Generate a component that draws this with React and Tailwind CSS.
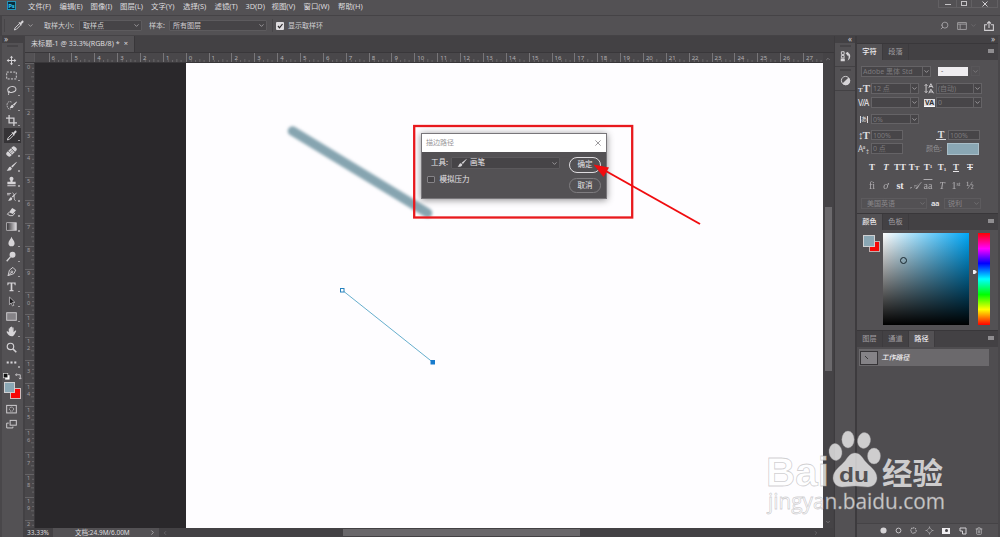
import React from "react";
import { ChevronDown, Search, Trash2 } from "lucide-react";

const MENUS = [
  ["文件(F)", "w-[31.5px]"], ["编辑(E)", "w-[31px]"], ["图像(I)", "w-[29.5px]"], ["图层(L)", "w-[31px]"],
  ["文字(Y)", "w-[32px]"], ["选择(S)", "w-[31.5px]"], ["滤镜(T)", "w-[31px]"], ["3D(D)", "w-[26px]"],
  ["视图(V)", "w-[32px]"], ["窗口(W)", "w-[34.5px]"], ["帮助(H)", "w-[31px]"],
];

const H_LABELS = [6, 5, 4, 3, 2, 1, ...Array.from({ length: 28 }, (_, i) => i)];
const V_LABELS = Array.from({ length: 20 }, (_, i) => String(i)).concat("2");

const s = { fill: "none", stroke: "#d2d0d3", strokeWidth: 1.4 };
const f = { fill: "#d6d4d7" };

const TOOLS = [
  ["move", <path {...f} d="M8 1l2.4 3H8.7v3.3H12V5.6L15 8l-3 2.4V8.7H8.7V12h1.7L8 15l-2.4-3h1.7V8.7H4v1.7L1 8l3-2.4v1.7h3.300V4H5.600z" />],
  ["marquee", <rect {...s} x="1" y="3" width="14" height="10" strokeDasharray="3 1.800" />],
  ["lasso", <g {...s}><ellipse cx="8.500" cy="6.500" rx="6" ry="4.200" transform="rotate(-12 8.500 6.500)" /><path d="M3.500 9c-1.500 1 .5 2.500 1.500 1.200S3.500 9 3.500 10.500c0 1.500 1 2 0 4" /></g>],
  ["quick", <g><path {...s} d="M8 3C4 1 1 4 1.500 8s3 6 5.500 5" strokeWidth="1.100" strokeDasharray="2.500 1" /><path {...f} d="M15.500 2L10 6.500l2 2L16 3zM9.500 7c-2 0-2.500 2-4 4.500 3 .5 5.500 0 5.800-2.500z" /></g>],
  ["crop", <path {...s} strokeWidth="1.900" d="M4.500 0v11.500H16M0 4.500h11.500V16" />],
  ["eyedrop", <g><path {...s} d="M9 5.500L3 11.500 2 14.500l3-1 6-6" /><path {...f} d="M8 4l1-1 1.500 1L13 1c2-1 3 1 2 2.500L12 6l1 1-1.500 1.500z" /></g>],
  ["heal", <g transform="rotate(-45 8 8)"><rect {...f} x="-.5" y="4" width="17" height="8" rx="3" /><path stroke="#535154" d="M5 4v8M11 4v8" /><path stroke="#535154" strokeWidth="1.400" strokeDasharray="1 1" d="M6 7h5M6 9.500h5" /></g>],
  ["brush", <path {...f} d="M15.500 1L7.500 7.500l2 2L15.500 2zM6.500 8.500C4 8 4 11 1 14c4 .5 7.500-.5 7.500-3.500z" />],
  ["stamp", <path {...f} d="M8 1a3 3 0 0 1 2.500 4.500C9.500 7 9.500 7 9.500 8.500H14V12H2V8.500h4.500C6.500 7 6.500 7 5.500 5.500A3 3 0 0 1 8 1zM2 13.300h12v1.500H2z" />],
  ["history", <g><path {...f} d="M15.500 2L8.500 8l1.500 1.500L15.500 3zM7.500 9C5 9 5.500 12 3 14c3 .5 6.500-.5 6-3.500z" /><path {...s} d="M1.500 3.500h6M1.500 5.500h4M9.500 2.500C14 5 10 13 14 14" strokeWidth="1.200" /></g>],
  ["eraser", <g><path {...f} d="M9 3l5.500 3L10 11.500 4.500 9z" /><path {...s} d="M4.500 9L2 12l4 2h4l3-4" /></g>],
  ["gradient", <rect x="1" y="2.500" width="14" height="11" fill="url(#tool-grad)" stroke="#d2d0d3" />],
  ["blur", <path {...f} d="M8 1c1 3.500 4.500 6 4.500 9.500a4.500 4.500 0 0 1-9 0C3.500 7 7 4.500 8 1z" />],
  ["dodge", <g><circle {...f} cx="9.500" cy="5.500" r="4.300" /><path {...s} strokeWidth="2" d="M6.500 8.500L1 15" /></g>],
  ["pen", <g {...s}><path d="M10 2l4 4-2.500 5L3 14l2-8z" /><path d="M3 14l5-5" /><circle cx="8.500" cy="8.500" r="1.300" /></g>],
  ["type", <path {...f} d="M2 2h12v4h-1.200l-.8-2.200H9.200v9.200l1.800.6V15H5v-1.400l1.800-.6V3.800H4L3.200 6H2z" />],
  ["select", <path d="M5 1.500v11l2.500-2.500 2 4.500 2-1-2-4.200H13z" fill="#1c1b1d" stroke="#d2d0d3" />],
  ["rect", <rect x="1" y="2.500" width="14" height="11" fill="#858387" stroke="#d2d0d3" strokeWidth="1.300" />],
  ["hand", <path {...f} d="M4 9V4c0-1 1.600-1 1.600 0v3V2.200c0-1.200 1.700-1.200 1.700 0V7 1.500c0-1.200 1.700-1.200 1.700 0V7l.3-4.500c0-1.100 1.700-1.100 1.700.1V9l2-2c1-1 2.500-.2 1.600 1C13 10.500 12 15 8.500 15 5 15 3 13 1 9c-.5-1.200 1-1.700 1.600-1z" />],
  ["zoom", <g {...s} strokeWidth="1.700"><circle cx="6.500" cy="6.500" r="4.700" /><path d="M10 10l5 5" strokeWidth="2.200" /></g>],
  ["more", <g {...f}><rect x="1" y="6.500" width="3" height="3" /><rect x="6.500" y="6.500" width="3" height="3" /><rect x="12" y="6.500" width="3" height="3" /></g>],
];

function Svg({ className, children }) {
  return <svg viewBox="0 0 16 16" className={className}>{children}</svg>;
}

function Chev() {
  return <ChevronDown className="size-[7px] shrink-0 text-[#b4b2b5]" strokeWidth={2.500} />;
}

function Field({ className, text, arrow = true }) {
  return (
    <div className={`flex h-[10.500px] shrink-0 items-center border border-[#656366] bg-[#474548] ${className}`}>
      <span className="min-w-0 flex-1 overflow-hidden whitespace-nowrap pl-px text-[7px] leading-[9px] text-[#7c7a7d]">{text}</span>
      {arrow && <span className="flex h-full w-[8px] items-center justify-center border-l border-[#656366]"><Chev /></span>}
    </div>
  );
}

function Toolbar() {
  return (
    <aside className="flex w-[25px] shrink-0 flex-col border-r-2 border-l-2 border-r-[#434144] border-l-[#49474a] bg-[#535154]">
      <div className="h-[7px] bg-[#434144] pl-[2px] text-[8px] leading-[6px] text-[#d0ced1]">»</div>
      <div className="mx-auto mt-[2px] h-[2px] w-[11px] bg-[#464447]" />
      <div className="mt-[6px] flex flex-col">
        {TOOLS.map(([name, icon]) => (
          <div key={name} className={`relative flex h-[15.080px] items-center ${name === "eyedrop" ? "mx-[2px] bg-[#353336] pl-[2px]" : "pl-[4px]"}`}>
            <Svg className="size-[11px]">{icon}</Svg>
            {name !== "zoom" && <span className={`absolute bottom-[2px] size-[1.500px] bg-[#a19fa2] ${name === "eyedrop" ? "left-[14px]" : "left-[16px]"}`} />}
          </div>
        ))}
      </div>
      <div className="mt-[2px] flex h-[9px] items-center gap-[5px] pl-[1px]">
        <Svg className="size-[7px]"><rect x="5" y="5" width="10" height="10" fill="#fff" /><rect x="1" y="1" width="10" height="10" fill="#111" stroke="#ddd" strokeWidth="1.500" /></Svg>
        <Svg className="size-[7px]"><path {...s} strokeWidth="2" d="M4 1L1 4l3 3M2 4h10v9M9 11l3 3 3-3" /></Svg>
      </div>
      <div className="relative ml-[1.500px] mt-px h-[18px]">
        <div className="absolute left-[6px] top-[6px] h-[11.500px] w-[11px] border border-[#d1bdbd] bg-[#f60707]" />
        <div className="absolute left-0 top-0 h-[11.500px] w-[11px] border border-[#cfcfd1] bg-[#8aa7b4]" />
      </div>
      <div className="mt-[4px] flex flex-col gap-[4px] pl-[4px]">
        <Svg className="size-[11px]"><rect {...s} x="1" y="2" width="14" height="11" /><circle {...s} cx="8" cy="7.500" r="3" strokeDasharray="1.500 1" /></Svg>
        <Svg className="size-[11px]"><rect {...s} x="6" y="2" width="9" height="7" /><path {...s} d="M4 6H1v7h9v-2" /></Svg>
      </div>
    </aside>
  );
}

function HorizontalRuler() {
  return (
    <div className="flex h-[10px] w-[798px] shrink-0 overflow-hidden border-b border-[#39373a] bg-[#49474a]">
      <div className="w-[10px] shrink-0 border-r border-[#5b595c] bg-[#535154]" />
      <div className="w-[13.600px] shrink-0" />
      {H_LABELS.map((n, i) => (
        <div key={i} className="relative h-full w-[22.860px] shrink-0 border-l border-[#777578] pl-[2px] text-[6px] leading-[11px] text-[#b4b2b5]">
          {n}
          <svg className="absolute bottom-0 left-0 h-[3px] w-full" viewBox="0 0 23 3" preserveAspectRatio="none"><path stroke="#777578" strokeWidth=".7" d="M4.500 1v2M9 1v2M13.500 0v3M18 1v2" /></svg>
        </div>
      ))}
    </div>
  );
}

function VerticalRuler() {
  return (
    <div className="h-full w-[10px] shrink-0 overflow-hidden border-r border-[#39373a] bg-[#49474a]">
      {V_LABELS.map((n, k) => (
        <div key={k} className="relative h-[22.860px] border-t border-[#656366] pl-[2px] text-[5.500px] leading-[7px] text-[#a19fa2]">
          {n.split("").map((c, i) => <div key={i}>{c}</div>)}
          <svg className="absolute right-0 top-0 h-full w-[3px]" viewBox="0 0 3 23" preserveAspectRatio="none"><path stroke="#777578" strokeWidth=".7" d="M1 4.500h2M1 9h2M0 13.500h3M1 18h2" /></svg>
        </div>
      ))}
    </div>
  );
}

function StrokePathDialog() {
  return (
    <div className="absolute left-[386px] top-[70px] h-[66px] w-[186px] border border-[#78767a] bg-[#535154] text-[8px] shadow-[0_1px_7px_rgba(0,0,0,0.45)]">
      <div className="flex h-[17.500px] items-center justify-between bg-white pl-[4px] pr-[5px] text-[#99979a]">
        <span className="text-[7px]">描边路径</span>
        <svg viewBox="0 0 8 8" className="size-[6px]"><path d="M.5.5l7 7M7.500.5l-7 7" stroke="#7c7a7d" strokeWidth="1" /></svg>
      </div>
      <div className="flex justify-between pl-[5px] pr-[5px] pt-[4px] text-[#e6e4e7]">
        <div className="flex flex-col">
          <div className="flex h-[15px] items-center pl-[4px]">
            <span className="w-[20px] whitespace-nowrap text-[7.500px]">工具:</span>
            <div className="flex h-[12px] w-[109px] items-center rounded-[1px] border border-[#5b595c] bg-[#464447] pl-[5px] pr-[1px]">
              <Svg className="size-[10px]">{TOOLS[7][1]}</Svg>
              <span className="ml-[3px] flex-1 text-[7.500px]">画笔</span>
              <Chev />
            </div>
          </div>
          <div className="mt-[2px] flex h-[14px] items-center">
            <span className="size-[7.500px] rounded-[1px] border border-[#858387] bg-[#464447]" />
            <span className="ml-[5px] text-[7.500px]">模拟压力</span>
          </div>
        </div>
        <div className="flex flex-col gap-[5px] pt-[1px]">
          <div className="flex h-[16px] w-[32px] items-center justify-center rounded-full border border-[#dedcdf] text-[7.500px]">确定</div>
          <div className="flex h-[15.500px] w-[32px] items-center justify-center rounded-full border border-[#7f7d80] text-[7.500px]">取消</div>
        </div>
      </div>
    </div>
  );
}

function Canvas() {
  return (
    <div className="relative flex h-[465px] w-[788px] shrink-0 overflow-hidden bg-[#2a282b] pl-[151px]">
      <div className="flex-1 bg-[#fefdff]" />
      <svg className="absolute inset-0 h-full w-full" viewBox="35 63 788 465">
        <defs><filter id="soft" x="-20%" y="-20%" width="140%" height="140%"><feGaussianBlur stdDeviation="1.500" /></filter></defs>
        <path d="M292.500 131L427.500 213" stroke="#86a4b0" strokeWidth="9.500" strokeLinecap="round" filter="url(#soft)" />
        <path d="M342 290l90.500 72" stroke="#55a5c6" strokeWidth=".9" />
        <rect x="340.500" y="288.500" width="3.500" height="3.500" fill="#fff" stroke="#2681bd" />
        <rect x="430.500" y="360" width="4.500" height="4.500" fill="#187bcd" />
      </svg>
      <StrokePathDialog />
      <svg className="absolute inset-0 h-full w-full" viewBox="35 63 788 465">
        <rect x="414.200" y="126" width="218" height="91.500" fill="none" stroke="#e8191d" strokeWidth="2.300" />
        <path d="M700 224L604 170" stroke="#f00c0f" strokeWidth="2" />
        <path d="M593.500 164.500l15.500 3-5.500 9.500z" fill="#f00c0f" />
      </svg>
    </div>
  );
}

function Document() {
  return (
    <main className="flex w-[809px] shrink-0 flex-col bg-[#434144]">
      <div className="flex h-[17px] shrink-0 items-stretch border-b border-[#39373a]">
        <div className="flex w-[110px] items-center justify-between border-r border-[#39373a] bg-[#535154] pl-[6px] pr-[6px] text-[7.100px] text-[#dedcdf]">
          <span className="whitespace-nowrap">未标题-1 @ 33.3%(RGB/8) *</span><span className="text-[7.500px]">×</span>
        </div>
      </div>
      <div className="flex h-[475px] shrink-0">
        <div className="flex w-[798px] flex-col">
          <HorizontalRuler />
          <div className="flex h-[465px]"><VerticalRuler /><Canvas /></div>
        </div>
        <div className="flex w-[10px] flex-col items-center justify-between bg-[#454346] py-[3px]">
          <ChevronDown className="size-[6px] rotate-180 text-[#a19fa2]" />
          <div className="-mt-[3px] h-[164px] w-[7px] bg-[#6b696c]" />
          <ChevronDown className="size-[6px] text-[#a19fa2]" />
        </div>
      </div>
      <div className="flex h-[9px] shrink-0 items-center bg-[#434144] text-[6.500px] leading-[9px] text-[#dedcdf]">
        <span className="w-[28px] pl-[2px]">33.33%</span>
        <div className="flex h-full w-[106px] items-center justify-between bg-[#535154] pl-[22px] pr-[3px]"><span>文档:24.9M/6.00M</span><ChevronDown className="size-[7px] -rotate-90" /></div>
        <ChevronDown className="ml-[3px] size-[6px] rotate-90 text-[#858387]" />
        <div className="ml-[175px] h-[7px] w-[237px] bg-[#69676a]" />
        <ChevronDown className="ml-[233px] size-[6px] -rotate-90 text-[#858387]" />
      </div>
    </main>
  );
}

function TabRow({ tabs, active }) {
  return (
    <div className="flex h-[17px] shrink-0 items-stretch border-t border-[#39373a] bg-[#434144] text-[7.200px] text-[#a19fa2]">
      {tabs.map((t) => <div key={t} className={`flex w-[26px] items-center justify-center border-r border-[#3d3b3e] ${t === active ? "bg-[#535154] font-medium text-[#efedf0]" : ""}`}>{t}</div>)}
      <div className="ml-auto mr-[4px] mt-[5px] h-[4px] w-[6px] bg-[#8f8d90]" />
    </div>
  );
}

const G = "flex w-[14px] shrink-0 items-baseline justify-center whitespace-nowrap font-['Liberation_Serif'] leading-none text-[#e9e7ea]";

function CharacterPanel() {
  return (
    <section className="h-[153px] shrink-0 text-[7px] text-[#dedcdf]">
      <div className="flex h-[22.500px] items-center pl-[4px]">
        <Field className="w-[70px]" text="Adobe 黑体 Std" />
        <div className="ml-[7px] h-[9.500px] w-[30px] bg-[#efedf0] pl-[3px] text-[7px] leading-[8px] text-[#656366]">-</div>
        <span className="ml-[3px] flex h-[10px] w-[9px] items-center justify-center border border-[#5e5c5f] opacity-50"><Chev /></span>
      </div>
      <div className="flex h-[12px] items-center pl-[1px]">
        <span className="flex w-[12px] items-baseline font-['Liberation_Serif'] font-bold leading-none"><i className="text-[7px] not-italic">T</i><i className="text-[11px] not-italic">T</i></span>
        <Field className="ml-px w-[48px]" text="12 点" />
        <Svg className="ml-[5px] size-[11px]"><path {...s} d="M3 2v12M1 4l2-2 2 2M1 12l2 2 2-2M7 7l3-6 3 6M8 5h4M7 15l3-6 4 6M8 13h5" /></Svg>
        <Field className="ml-[1px] w-[46px]" text="(自动)" />
      </div>
      <div className="mt-[2px] flex h-[12px] items-center pl-[1px]">
        <span className="w-[12px] text-[8px] font-medium leading-none tracking-[-1px]">V/A</span>
        <Field className="ml-px w-[48px]" text="" />
        <span className="ml-[5px] flex h-[8px] w-[11px] items-center justify-center border-b border-white bg-[#dedcdf] text-[7px] font-bold leading-none text-[#333134]">VA</span>
        <Field className="ml-[1px] w-[46px]" text="0" />
      </div>
      <div className="mt-[4.500px] flex h-[12px] items-center pl-[3px]">
        <span className="w-[8px] border-x border-[#dedcdf] text-center text-[6px] leading-[7px]">あ</span>
        <Field className="ml-[3px] w-[48px]" text="0%" />
      </div>
      <div className="mt-[4px] flex h-[12px] items-center pl-[1px]">
        <span className="w-[12px] whitespace-nowrap font-['Liberation_Serif'] text-[11px] font-bold leading-none tracking-[-1px]">↕T</span>
        <Field className="ml-px w-[32px]" arrow={false} text="100%" />
        <span className="ml-[33px] w-[10px] border-b border-[#dedcdf] text-center font-['Liberation_Serif'] text-[10px] font-bold leading-[9px]">T</span>
        <Field className="ml-[2px] w-[32px]" arrow={false} text="100%" />
      </div>
      <div className="mt-px flex h-[13px] items-center pl-[1px]">
        <span className="w-[12px] whitespace-nowrap text-[8px] leading-none tracking-[-0.500px]">Aª<sub className="text-[5px]">↕</sub></span>
        <Field className="ml-px w-[32px]" arrow={false} text="0 点" />
        <span className="ml-[23px] w-[21px] text-[7px] text-[#918f92]">颜色:</span>
        <div className="h-[12px] w-[32px] border border-[#a9bec8] bg-[#8aa7b4]" />
      </div>
      <div className="mt-[5.500px] flex h-[14px] items-center pl-[8px] text-[9px] font-bold">
        <span className={G}>T</span><span className={`${G} italic`}>T</span><span className={G}>TT</span><span className={G}>T<small className="text-[7px]">T</small></span>
        <span className={G}>T<sup className="text-[5px]">1</sup></span><span className={G}>T<sub className="text-[5px]">1</sub></span><span className={`${G} underline`}>T</span><span className={`${G} line-through`}>T</span>
      </div>
      <div className="mt-[4px] flex h-[14px] items-center pl-[8px] text-[10px]">
        <span className={`${G} opacity-60`}>fi</span><span className={`${G} italic opacity-60`}>ơ</span><span className={`${G} font-bold`}>st</span><span className={`${G} italic opacity-60`}>𝒜</span>
        <span className={`${G} overline opacity-60`}>aa</span><span className={`${G} italic opacity-60`}>T</span><span className={`${G} opacity-60`}>1<sup className="text-[6px]">st</sup></span><span className={`${G} opacity-60`}>½</span>
      </div>
      <div className="mt-[5px] flex h-[12px] items-center pl-[4px] text-[7px] text-[#8a888b]">
        <div className="flex h-[11px] w-[66px] items-center justify-between border border-[#5d5b5e] pl-[5px]">美国英语<span className="opacity-40"><Chev /></span></div>
        <span className="mx-[4px] w-[9px] text-[7.500px] font-bold leading-none tracking-[-0.500px] text-[#dedcdf]">aa</span>
        <div className="flex h-[11px] w-[37px] items-center justify-between border border-[#5d5b5e] pl-[3px]">锐利<span className="opacity-40"><Chev /></span></div>
      </div>
    </section>
  );
}

function ColorPanel() {
  return (
    <section className="flex h-[100px] shrink-0 pt-[3px]">
      <div className="relative ml-[6px] mt-[2px] w-[20px]">
        <div className="absolute left-[6px] top-[6px] size-[11px] border border-[#c1adad] bg-[#f60707]" />
        <div className="absolute left-0 top-0 size-[11.500px] border border-[#cfcfd1] bg-[#8aa7b4]" />
      </div>
      <div className="relative h-[91.500px] w-[86px] bg-[linear-gradient(to_bottom,transparent,#000),linear-gradient(to_right,#fff,#00a8f8)]">
        <div className="absolute left-[17px] top-[24px] size-[7px] rounded-full border border-[#18262d]" />
      </div>
      <svg viewBox="0 0 5 6" className="ml-[4px] mt-[36px] h-[6px] w-[5px]"><path d="M0 1h2l2 2-2 2H0z" fill="#efedf0" /></svg>
      <div className="h-[91.500px] w-[11.500px] bg-[linear-gradient(to_bottom,#f00,#f0f_17%,#00f_33%,#0ff_50%,#0f0_67%,#ff0_83%,#f00)]" />
    </section>
  );
}

function PathsPanel() {
  return (
    <section className="flex flex-1 flex-col bg-[#4f4d50]">
      <div className="ml-[2px] mt-[2px] flex h-[17px] w-[130px] items-center bg-[#6b696c]">
        <div className="ml-px flex h-[14px] w-[18px] items-center justify-center border border-[#363437] bg-[#858387]"><svg viewBox="0 0 4 4" className="-ml-[6px] size-[3px]"><path d="M0 0l4 4" stroke="#222" /></svg></div>
        <span className="ml-[4px] -skew-x-12 text-[7px] font-medium text-[#f3f1f4]">工作路径</span>
      </div>
      <div className="mt-auto flex h-[14px] items-center border-t border-[#454346] bg-[#535154] pl-[23px]">
        <Svg className="mr-[8px] size-[7px]"><circle {...f} cx="8" cy="8" r="7" /></Svg>
        <Svg className="mr-[8px] size-[7px]"><circle {...s} strokeWidth="2" cx="8" cy="8" r="5.500" /></Svg>
        <Svg className="mr-[8px] size-[7px]"><circle {...s} strokeWidth="2.500" strokeDasharray="2.500 2" cx="8" cy="8" r="6" /></Svg>
        <Svg className="mr-[8px] size-[9px]"><path {...s} stroke="#a19fa2" d="M8 3l5 5-5 5-5-5z" /><path fill="#a19fa2" d="M7 1h2v3H7zM7 12h2v3H7zM1 7h3v2H1zM12 7h3v2h-3z" /></Svg>
        <span className="mr-[9px] flex h-[6px] w-[8px] items-center justify-center bg-[#efedf0]"><i className="size-[3px] rounded-full bg-[#454346]" /></span>
        <Svg className="mr-[8px] size-[8px]"><path {...s} strokeWidth="2" d="M2 2h12v12H7V8H2z" /></Svg>
        <Trash2 className="size-[8px] text-[#c4c2c5]" />
      </div>
    </section>
  );
}

function Watermark() {
  return (
    <svg viewBox="760 425 190 90" className="absolute left-[760px] top-[425px] h-[90px] w-[190px]" fill="#fff" fillOpacity=".72" stroke="#9a989b" strokeOpacity=".45" strokeWidth=".8">
      <text x="766" y="485.500" textLength="63" lengthAdjust="spacingAndGlyphs" fontSize="40" fontWeight="700" fontFamily="Liberation Sans, sans-serif">Bai</text>
      <ellipse cx="835.500" cy="452" rx="6.500" ry="8.500" transform="rotate(-8 835.500 452)" />
      <ellipse cx="848" cy="439.500" rx="6.200" ry="8.500" />
      <ellipse cx="864" cy="440.500" rx="6.500" ry="8" transform="rotate(12 864 440.500)" />
      <ellipse cx="874" cy="456" rx="6.500" ry="8" />
      <path d="M855 453c-5 0-7 4-10 8-4 5-12 9-12 17 0 5 4 9 9 9 5 0 8-1 13-1s8 1 13 1c5 0 9-4 9-9 0-8-8-12-12-17-3-4-5-8-10-8z" />
      <text x="839" y="481.500" textLength="30" lengthAdjust="spacingAndGlyphs" fontSize="20" fontWeight="700" fill="#535154" fillOpacity="1" stroke="none" fontFamily="Liberation Sans, sans-serif">du</text>
      <text x="882" y="483.500" textLength="61" lengthAdjust="spacingAndGlyphs" fontSize="30" fontWeight="700" stroke="none" fontFamily="Noto Sans CJK SC, sans-serif">经验</text>
      <text x="768" y="508.500" textLength="177" lengthAdjust="spacingAndGlyphs" fontSize="22" fontWeight="500" fontFamily="Open Sans, sans-serif">jingyan.baidu.com</text>
    </svg>
  );
}

export default function App() {
  return (
    <div className="relative flex h-[537px] w-[1000px] flex-col overflow-hidden bg-[#535154] font-['Noto_Sans','Noto_Sans_CJK_SC',sans-serif] leading-none">
      <svg className="absolute size-0"><defs><linearGradient id="tool-grad"><stop stopColor="#333134" /><stop offset="1" stopColor="#dedcdf" /></linearGradient></defs></svg>
      <header className="flex h-[16px] shrink-0 items-start border-b border-[#454346] text-[7.400px] text-[#dedcdf]">
        <div className="ml-[7px] mt-px flex h-[9px] w-[9px] items-center justify-center border border-[#2595ba] bg-[#0a2d3d] text-[6px] font-bold text-[#31c5f4]">Ps</div>
        <nav className="ml-[12px] mt-[2.500px] flex">
          {MENUS.map(([m, w]) => <span key={m} className={`shrink-0 whitespace-nowrap ${w}`}>{m}</span>)}
        </nav>
        <div className="ml-auto mr-[2px] flex h-[8px] border border-t-0 border-[#626063]">
          <span className="flex w-[17px] items-center justify-center"><i className="mt-[2px] h-[1.500px] w-[6px] bg-[#c4c2c5]" /></span>
          <span className="flex w-[16px] items-center justify-center border-x border-[#626063]"><i className="h-[5px] w-[6px] border border-[#c4c2c5]" /></span>
          <span className="flex w-[25px] items-center justify-center"><svg viewBox="0 0 6 6" className="size-[6px]"><path d="M.5.5l5 5m0-5l-5 5" stroke="#d0ced1" strokeWidth="1" /></svg></span>
        </div>
      </header>
      <div className="flex h-[20px] shrink-0 items-center border-l-2 border-b border-[#454346] text-[7px] text-[#d0ced1]">
        <span className="ml-[2px] h-[13px] w-px bg-[#474548]" />
        <Svg className="ml-[8px] size-[11px]">{TOOLS[5][1]}</Svg>
        <span className="ml-[3px]"><Chev /></span>
        <span className="ml-[10px] w-[35px] whitespace-nowrap">取样大小:</span>
        <div className="flex h-[11px] w-[63px] items-center justify-between rounded-[1px] border border-[#5d5b5e] bg-[#464447] px-[3px] pr-px">取样点<Chev /></div>
        <span className="ml-[7px] w-[20px] whitespace-nowrap">样本:</span>
        <div className="flex h-[11px] w-[98px] items-center justify-between rounded-[1px] border border-[#5d5b5e] bg-[#464447] px-[3px] pr-px">所有图层<Chev /></div>
        <span className="ml-[5px] h-[13px] w-px bg-[#474548]" />
        <svg viewBox="0 0 8 8" className="ml-[3px] size-[8px]"><rect width="8" height="8" rx="1" fill="#dedcdf" /><path d="M2 4l1.500 1.800L6.500 2" fill="none" stroke="#29272a" strokeWidth="1.200" /></svg>
        <span className="ml-[4px]">显示取样环</span>
        <div className="ml-auto mr-[6px] flex items-center text-[#b4b2b5]">
          <Search className="mr-[8px] size-[9px] -scale-x-100" />
          <Svg className="size-[10px]"><path {...s} stroke="#a5a3a6" d="M1 2.500h14v11H1zM1 5h14M5 5v8" /></Svg>
          <span className="ml-[3px] mr-[7px] opacity-30"><Chev /></span>
          <Svg className="size-[10px]"><path {...s} strokeWidth="1.700" d="M5 6H1v9h14V6h-4M8 11V1M5 4l3-3 3 3" /></Svg>
        </div>
      </div>
      <div className="flex h-[501px]">
        <Toolbar />
        <Document />
        <aside className="flex w-[22px] shrink-0 flex-col border-x border-[#3d3b3e] bg-[#535154]">
          <div className="h-[7px] bg-[#434144] pr-[3px] text-right text-[8px] leading-[6px] text-[#d0ced1]">«</div>
          <div className="flex h-[24px] flex-col items-center border-b border-[#434144] pt-[2px]"><i className="mb-[4px] h-[2px] w-[11px] bg-[#464447]" /><Svg className="size-[11px]"><path {...s} d="M2 1h4v4H2zM2 6.500h4v3.500H2z" /><path {...f} d="M1 11h6v4H1zM8 3l4-2v2c4 1 4 9-1 11 2-3 2-8 1-8v2z" /></Svg></div>
          <div className="flex h-[24px] flex-col items-center border-b border-[#434144] pt-[2px]"><i className="mb-[4px] h-[2px] w-[11px] bg-[#464447]" /><Svg className="size-[11px]"><circle {...s} cx="8" cy="8" r="6" /><path {...f} d="M12.500 3.500A6.400 6.400 0 1 1 3.500 12.500z" /></Svg></div>
        </aside>
        <aside className="flex w-[144px] shrink-0 flex-col border-r-2 border-l border-r-[#49474a] border-l-[#3d3b3e] bg-[#535154]">
          <div className="h-[7px] shrink-0 bg-[#434144] pr-[3px] text-right text-[8px] leading-[6px] text-[#d0ced1]">»</div>
          <TabRow tabs={["字符", "段落"]} active="字符" />
          <CharacterPanel />
          <TabRow tabs={["颜色", "色板"]} active="颜色" />
          <ColorPanel />
          <TabRow tabs={["图层", "通道", "路径"]} active="路径" />
          <PathsPanel />
        </aside>
      </div>
      <Watermark />
    </div>
  );
}
